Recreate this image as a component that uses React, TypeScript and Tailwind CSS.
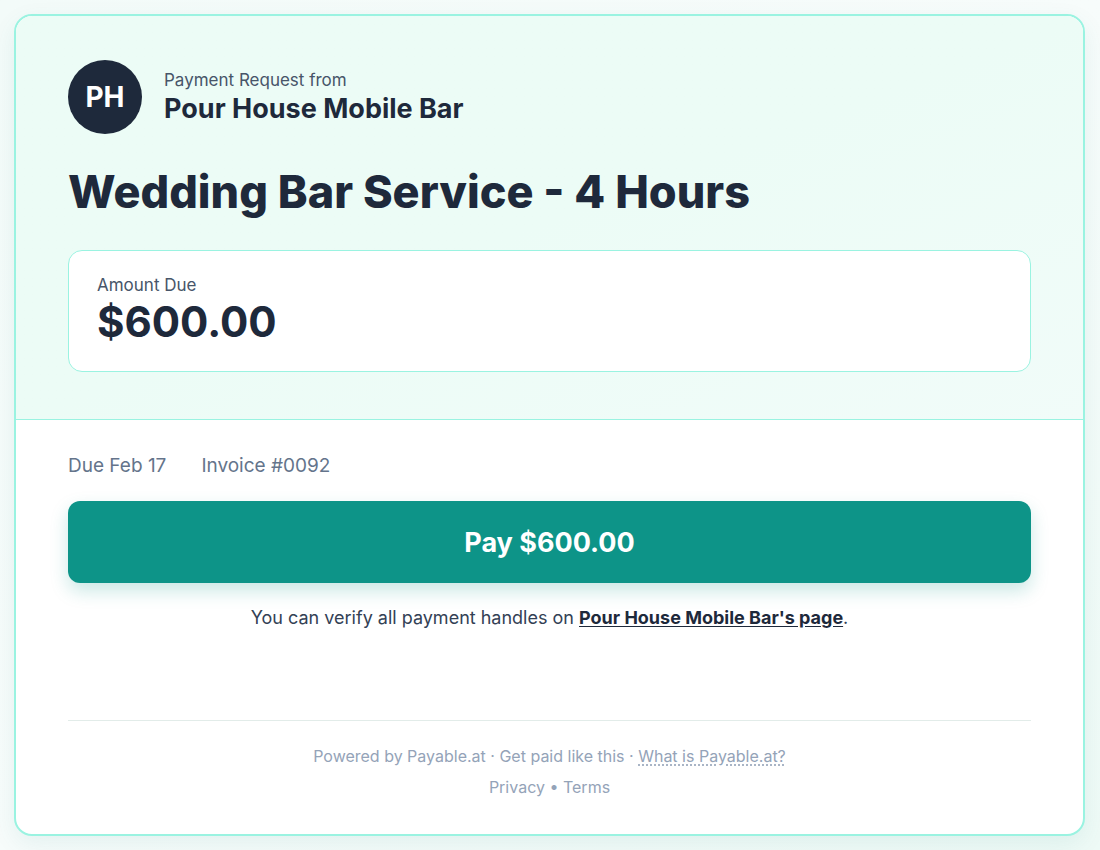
import React from "react";

export default function App() {
  return (
    <div
      className="min-h-[850px] w-[1100px] bg-gradient-to-br from-[#f3fbf9] via-[#f7fcfb] to-[#eefaf6] pt-[14px] px-[14px] pb-[14px]"
      style={{ fontFamily: "Inter, 'Noto Sans', sans-serif" }}
    >
      <div className="w-[1071px] overflow-hidden rounded-[18px] border-2 border-[#9af3e1] bg-white shadow-[0_8px_24px_rgba(15,118,110,0.08)]">
        {/* Header */}
        <div className="border-b border-[#9af3e1] bg-gradient-to-br from-[#ecfcf6] via-[#ecfcf6] to-[#f1fcf9] px-[52px] pt-[44px] pb-[47px]">
          <div className="flex items-center gap-[22px]">
            <div className="flex h-[74px] w-[74px] items-center justify-center rounded-full bg-[#1e293b] text-[28px] font-bold text-white">
              PH
            </div>
            <div className="flex flex-col">
              <div className="text-[17px] leading-[22px] text-[#475569]">Payment Request from</div>
              <div className="mt-[2px] text-[27px] font-bold leading-[32px] text-[#1e293b]">Pour House Mobile Bar</div>
            </div>
          </div>
          <h1 className="mt-[30px] text-[45px] font-extrabold leading-[56px] text-[#1e293b]">
            Wedding Bar Service - 4 Hours
          </h1>
          <div className="mt-[30px] rounded-[14px] border border-[#9af3e1] bg-white px-[28px] pt-[23px] pb-[24px]">
            <div className="text-[17px] leading-[22px] text-[#475569]">Amount Due</div>
            <div className="mt-[1px] text-[42px] font-bold leading-[50px] text-[#1e293b]">$600.00</div>
          </div>
        </div>
        {/* Body */}
        <div className="px-[52px] pt-[33px] pb-[35px]">
          <div className="flex gap-[35px] text-[19px] leading-[26px] text-[#64748b]">
            <span>Due Feb 17</span>
            <span>Invoice #0092</span>
          </div>
          <button className="mt-[22px] flex h-[82px] w-full items-center justify-center rounded-[12px] bg-[#0d9488] pt-[2px] text-[27px] font-bold text-white shadow-[0_8px_18px_rgba(13,148,136,0.22)]">
            Pay $600.00
          </button>
          <p className="mt-[22px] text-center text-[18px] leading-[26px] text-[#334155]">
            You can verify all payment handles on{" "}
            <a className="font-bold text-[#1e293b] underline underline-offset-2">Pour House Mobile Bar's page</a>.
          </p>
          <div className="mt-[89px] border-t border-[#e2ece9]" />
          <div className="mt-[23px] text-center text-[16px] leading-[24px] text-[#94a3b8]">
            Powered by Payable.at · Get paid like this ·{" "}
            <span className="underline decoration-dotted underline-offset-[3px]">What is Payable.at?</span>
          </div>
          <div className="mt-[7px] text-center text-[16px] leading-[24px] text-[#94a3b8]">
            Privacy • Terms
          </div>
        </div>
      </div>
    </div>
  );
}
